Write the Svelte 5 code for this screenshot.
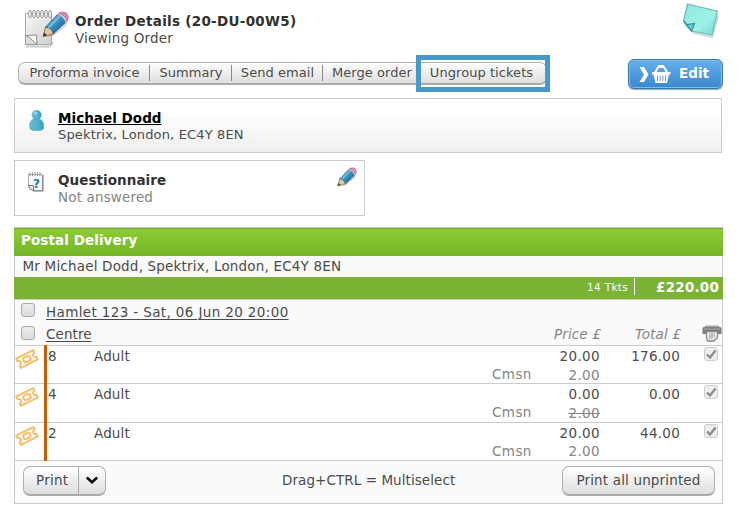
<script>
  const actions = [
    { label: 'Proforma invoice', w: 131 },
    { label: 'Summary', w: 82 },
    { label: 'Send email', w: 91 },
    { label: 'Merge order', w: 98 },
    { label: 'Ungroup tickets', w: 121 }
  ];
  const lines = [
    { qty: 8, type: 'Adult', price: '20.00', total: '176.00', commission: '2.00', waived: false },
    { qty: 4, type: 'Adult', price: '0.00', total: '0.00', commission: '2.00', waived: true },
    { qty: 2, type: 'Adult', price: '20.00', total: '44.00', commission: '2.00', waived: false }
  ];
</script>

{#snippet pencil(size)}
  <svg width={size} height={size} viewBox="0 0 26 26">
    <defs>
      <linearGradient id="shaft" x1="0" y1="0" x2="1" y2="1">
        <stop offset="0.2" stop-color="#67b5dc" /><stop offset="0.55" stop-color="#3087b9" /><stop offset="1" stop-color="#17577e" />
      </linearGradient>
    </defs>
    <path d="M2 25 L21 12 L25 8 L24 14 L11 24Z" fill="#000" opacity=".15" />
    <path d="M1 24.500 L3.500 15.500 Q9.500 15 11 22Z" fill="#e6c693" stroke="#78664e" stroke-width=".8" />
    <path d="M1 24.500 L2 20.800 L4.800 23.300Z" fill="#333" />
    <path d="M3.500 15.500 L14.500 3.800 Q21 4 22.500 11 L11 22 Q10 16 3.500 15.500Z" fill="url(#shaft)" stroke="#225c7d" stroke-width=".8" />
    <path d="M6 16.500 L17 5" stroke="#84c7e5" stroke-width="1.400" />
    <path d="M14.500 3.800 L16.300 2.200 Q22.500 3 24.300 9.400 L22.500 11 Q20.700 5 14.500 3.800Z" fill="#ced5d9" stroke="#70828d" stroke-width=".6" />
    <path d="M16.300 2.200 Q20 -.3 23.700 2.200 Q26.500 5.500 24.300 9.400 Q22 3.500 16.300 2.200Z" fill="#e58bbd" stroke="#a95a88" stroke-width=".7" />
  </svg>
{/snippet}

<main>
  <header>
    <div class="order-icon">
      <svg width="44" height="40" viewBox="0 0 44 40">
        <defs><linearGradient id="paper" x1="0" y1="0" x2="1" y2="1"><stop stop-color="#f8f8f8" /><stop offset="1" stop-color="#d0d0d0" /></linearGradient></defs>
        <path d="M2 38.500H26L29 34" fill="none" stroke="#aaa" stroke-width="2" opacity=".6" />
        <path d="M1.500 5.500H27.500V36.500H10L1.500 28Z" fill="url(#paper)" stroke="#aaa" />
        <path d="M1.500 27.500V36.500H13L9.500 28.500Z" fill="#ddd" stroke="#999" />
        <path d="M3 27.500L13 36.500L12.500 27Z" fill="#fafafa" stroke="#777" stroke-width=".8" />
        {#each [6, 10, 14, 18, 22, 26] as x}
          <ellipse cx={x} cy="6" rx="1.500" ry="4" fill="#eee" stroke="#999" stroke-width=".9" />
        {/each}
      </svg>
      <div class="over-pencil">{@render pencil(27)}</div>
    </div>
    <div class="heading">
      <h1>Order Details (20-DU-00W5)</h1>
      <p>Viewing Order</p>
    </div>
    <svg class="note" width="40" height="38" viewBox="0 0 40 38">
      <defs><linearGradient id="sticky" x1="0" y1="0" x2="1" y2="1"><stop stop-color="#8fe8df" /><stop offset=".6" stop-color="#9ef2e8" /><stop offset="1" stop-color="#6ed8d0" /></linearGradient></defs>
      <path d="M4 23L13 31L31 35L37 14" fill="none" stroke="#7a9a9a" stroke-width="2" opacity=".35" />
      <path d="M6.500 2L36.500 9.200L31 33L10.500 29L2.500 19Z" fill="url(#sticky)" stroke="#6db9b6" stroke-width="1.200" />
      <path d="M2.500 19L6 22.500L13.500 21.500L10.500 29Z" fill="#66cfd0" stroke="#378e95" stroke-width="1.200" />
    </svg>
  </header>

  <div class="commands">
    <nav>
      {#each actions as a}
        <button style:width={`${a.w}px`}>{a.label}</button>
      {/each}
      <span class="highlight"></span>
    </nav>
    <button class="edit">
      <svg width="33" height="22" viewBox="0 0 33 22">
        <path d="M1.500 4H6L10.500 11.500L6 19H1.500L6 11.500Z" fill="#fff" />
        <path d="M17 10L20.500 3.500H25.500L29.500 10" fill="none" stroke="#fff" stroke-width="2" />
        <rect x="20.500" y="2" width="5" height="3" rx="1" fill="#fff" />
        <path d="M14 9H32.500V11.500H31L29 20H17.500L15.500 11.500H14Z" fill="#fff" />
        <path d="M19.500 12.500V18M22.200 12.500V18M24.900 12.500V18M27.600 12.500V18" stroke="#539dda" stroke-width="1" />
      </svg>
      <span>Edit</span>
    </button>
  </div>

  <section class="card customer">
    <svg class="lead" width="20" height="24" viewBox="0 0 20 24">
      <defs><linearGradient id="person" x1="0" y1="0" x2="1" y2="0"><stop stop-color="#62bfd6" /><stop offset=".5" stop-color="#55b3cd" /><stop offset="1" stop-color="#3a9dbb" /></linearGradient></defs>
      <path d="M3 18.500Q1.500 10.500 7 9H12Q17.500 10.500 16.500 18.500Q16 20.500 10 20.500Q3.500 20.500 3 18.500Z" fill="url(#person)" stroke="#4ba3bb" stroke-width=".7" />
      <circle cx="9.700" cy="5" r="4.600" fill="url(#person)" stroke="#4ba3bb" stroke-width=".7" />
      <ellipse cx="8.500" cy="3.300" rx="2" ry="1.500" fill="#8ad4e5" />
    </svg>
    <div>
      <strong class="name">Michael Dodd</strong>
      <p class="place">Spektrix, London, EC4Y 8EN</p>
    </div>
  </section>

  <section class="card questions">
    <svg class="lead" width="20" height="24" viewBox="0 0 20 24">
      <path d="M1.500 3.500H15.500V19.500H6L1.500 15Z" fill="#f4f6f7" stroke="#aaa" />
      <path d="M16 4V20H6" fill="none" stroke="#777" />
      <path d="M1.500 14.500H6.500V19.500L3 18Z" fill="#eee" stroke="#777" />
      <path d="M3 1V5M5.500 1V5M8 1V5M10.500 1V5M13 1V5" stroke="#999" />
      <text x="6" y="16.500" class="mark">?</text>
    </svg>
    <div class="qtext">
      <strong>Questionnaire</strong>
      <p>Not answered</p>
    </div>
    <div class="pen">{@render pencil(20)}</div>
  </section>

  <section class="delivery">
    <h2>Postal Delivery</h2>
    <div class="address">Mr Michael Dodd, Spektrix, London, EC4Y 8EN</div>
    <div class="summary"><span class="tickets">14 Tkts</span><b>£220.00</b></div>
    <div class="event">
      <div class="erow"><i class="box"></i><u class="show">Hamlet 123 - Sat, 06 Jun 20 20:00</u></div>
      <div class="erow second">
        <i class="box"></i><u>Centre</u>
        <em class="ph">Price £</em><em class="th">Total £</em>
        <svg width="20" height="18" viewBox="0 0 20 18">
          <path d="M3 .5H17V3H3Z" fill="#aaa" />
          <path d="M.5 3.500Q.5 2 2 2H18Q19.500 2 19.500 3.500V9H.5Z" fill="#7d7d7d" />
          <path d="M2 4H18" stroke="#aaa" />
          <path d="M4.500 6.500H15.500V12.500L12 16H5.500L4.500 12Z" fill="#ececec" stroke="#888" stroke-width="1.300" />
          <path d="M7 9H13M7 11H13M7 13H10.500" stroke="#999" />
        </svg>
      </div>
    </div>
    {#each lines as l}
      <div class="line">
        <svg class="ticket" width="24" height="24" viewBox="0 0 24 24">
          <g transform="rotate(-27 12 12)" fill="none" stroke="#fabd66" stroke-width="1.900" stroke-linejoin="round">
            <path d="M2.500 6.800H21.500V9.600Q19 10 19 12Q19 14 21.500 14.400V17.200H2.500V14.400Q5 14 5 12Q5 10 2.500 9.600Z" />
            <rect x="8.300" y="9.500" width="7.400" height="5" rx="2.200" />
          </g>
        </svg>
        <span class="qty">{l.qty}</span>
        <span class="type">{l.type}</span>
        <span class="cm">Cmsn</span>
        <span class="price">{l.price}<br /><small class:waived={l.waived}>{l.commission}</small></span>
        <span class="total">{l.total}</span>
        <i class="box tick"><svg width="11" height="11" viewBox="0 0 11 11"><path d="M1 5.500L4 8.500L9.500 1.500" fill="none" stroke="#8b8b8b" stroke-width="2.300" /></svg></i>
      </div>
    {/each}
    <footer>
      <div class="split">
        <button>Print</button>
        <button class="more" aria-label="More print options"><svg width="14" height="9" viewBox="0 0 14 9"><path d="M1.800 1.500L7 6.300L12.200 1.500" fill="none" stroke="#111" stroke-width="2.600" /></svg></button>
      </div>
      <span class="hint">Drag+CTRL = Multiselect</span>
      <button class="all">Print all unprinted</button>
    </footer>
  </section>
</main>

<style>
  :global(body) { background: #fff; }
  main { width: 739px; height: 510px; overflow: hidden; box-sizing: border-box; padding-left: 14px; font: 13.500px/18px "DejaVu Sans", Verdana, sans-serif; color: #4b4b4b; white-space: nowrap; }
  * { box-sizing: border-box; }
  p, h1, h2 { margin: 0; font-weight: normal; }
  svg { display: block; flex: none; }
  button { font: inherit; color: inherit; border: 0; padding: 0; background: none; white-space: nowrap; letter-spacing: inherit; }
  header { height: 58px; display: flex; align-items: flex-start; }
  .order-icon { position: relative; width: 61px; height: 50px; padding: 8px 0 0 10px; }
  .over-pencil { position: absolute; left: 28px; top: 11px; }
  .heading { width: 608px; padding-top: 13px; }
  h1 { font-size: 13.500px; line-height: 17px; font-weight: bold; color: #303030; letter-spacing: .29px; }
  .heading p { line-height: 17px; letter-spacing: .18px; }
  .note { margin: 2px 0 0 -2px; }
  .commands { height: 40px; display: flex; align-items: flex-start; }
  nav { position: relative; display: flex; width: 529px; height: 23px; margin: 4px 81px 0 4px; border: 1px solid #b4b4b4; border-bottom: 2px solid #aaa; border-radius: 7px; background: linear-gradient(#fdfdfd, #dedede); letter-spacing: .06px; }
  nav button { height: 20px; line-height: 18px; padding-bottom: 1px; font-size: 13px; }
  nav button:nth-child(-n+3) { background: linear-gradient(#888, #888) right 2px / 1px 16px no-repeat; }
  .highlight { position: absolute; left: 397px; top: -8px; width: 134px; height: 37px; border: 5px solid #4799cc; }
  .edit { width: 95px; height: 30px; margin-top: 1px; display: flex; align-items: center; padding-left: 9px; border: 1px solid #3d79a8; border-radius: 6px; background: linear-gradient(#65b0ec, #3b87cc); box-shadow: inset 0 0 0 1px #7bbcee, 0 1px 1px #8aa; color: #fff; font-weight: bold; }
  .edit span { margin: -2px 0 0 8px; }
  .card { display: flex; border: 1px solid #ccc; background: #fff; }
  .customer { width: 708px; height: 55px; margin-bottom: 7px; background: linear-gradient(#fff 25%, #efefef); padding-top: 11px; }
  .lead { margin: 0 11px 0 12px; }
  .name { display: block; line-height: 17px; color: #000; text-decoration: underline; letter-spacing: .04px; }
  .place { font-size: 13px; line-height: 16px; letter-spacing: .15px; }
  .questions { width: 351px; height: 56px; margin-bottom: 11px; padding-top: 10px; }
  .qtext { width: 279px; }
  .qtext strong { display: block; line-height: 18px; color: #333; letter-spacing: .06px; }
  .qtext p { line-height: 16px; color: #858585; letter-spacing: .15px; }
  .pen { margin-top: -4px; }
  .mark { font: bold 12px "DejaVu Sans", sans-serif; fill: #2377aa; }
  .delivery { width: 709px; height: 277px; border: 1px solid #ccc; background: #fafafa; }
  h2 { height: 28px; margin: 0 -1px; padding-left: 7px; border-top: 1px solid #70ac28; background: linear-gradient(#8ccb34, #73b526); color: #fff; font-size: 13.500px; line-height: 23px; font-weight: bold; letter-spacing: .08px; }
  .address { height: 21px; padding-left: 7.500px; line-height: 21px; letter-spacing: .19px; }
  .summary { height: 22px; margin: 0 -1px; display: flex; justify-content: flex-end; background: #7bb335; color: #fff; padding-right: 4px; line-height: 20px; }
  .tickets { height: 17px; margin-top: 1px; line-height: 18px; padding-right: 6px; border-right: 1px solid #fff; font-size: 10.500px; letter-spacing: .3px; }
  .summary b { width: 84px; text-align: right; letter-spacing: .2px; }
  .event { height: 47px; border-top: 1px solid #ccc; border-bottom: 1px solid #ccc; letter-spacing: .37px; }
  .erow { height: 23px; display: flex; padding-left: 6px; line-height: 24px; }
  .second { height: 22px; line-height: 22px; }
  .box { width: 14px; height: 14px; flex: none; border: 1px solid #aaa; border-radius: 3px; background: linear-gradient(#ededed, #dcdcdc); margin-top: 3px; }
  .erow u { margin-left: 11px; text-underline-offset: 2px; text-decoration-thickness: 1px; }
  .second u { letter-spacing: .1px; }
  em { color: #858585; text-align: right; letter-spacing: .15px; }
  .ph { margin-left: auto; }
  .th { width: 80px; margin-right: 21px; }
  .second svg { margin: 2px 0 0 1px; }
  .second .th { margin-right: 20px; }
  .line { height: 38.300px; display: flex; background: #fff; border-bottom: 1px solid #ccc; line-height: 18.500px; }
  .ticket { margin: 1px 4px 0 0; width: 24px; height: 24px; }
  .qty { width: 48px; padding-left: 1px; border-left: 3px solid #c75c00; margin: -1px 0 -1px 1px; padding-top: 2px; }
  .type { width: 400px; padding-top: 1px; padding-left: 2px; letter-spacing: .15px; }
  .cm { color: #858585; padding-top: 19px; width: 41px; letter-spacing: .4px; }
  .price { width: 67px; text-align: right; padding-top: 1px; letter-spacing: .35px; }
  small { font-size: inherit; color: #858585; }
  .waived { text-decoration: line-through; }
  .total { width: 80px; text-align: right; padding-top: 1px; letter-spacing: .25px; }
  .tick { margin: 1px 0 0 24px; border-color: #ccc; padding: 1px; background: #eee; }
  footer { height: 43px; display: flex; align-items: flex-start; padding: 5px 7px 0 8px; }
  .split, .all { height: 30px; border: 1px solid #b0b0b0; border-bottom: 2px solid #aaa; border-radius: 7px; background: linear-gradient(#fff, #dedede); line-height: 27px; }
  .split { width: 83px; display: flex; }
  .split button { width: 55px; padding-left: 2px; letter-spacing: .25px; }
  .split .more { width: 27px; border-left: 1px solid #aaa; display: flex; align-items: center; justify-content: center; padding: 0; }
  .hint { margin-left: 176px; line-height: 29px; letter-spacing: .07px; }
  .all { width: 153px; margin-left: auto; letter-spacing: .16px; }
</style>
